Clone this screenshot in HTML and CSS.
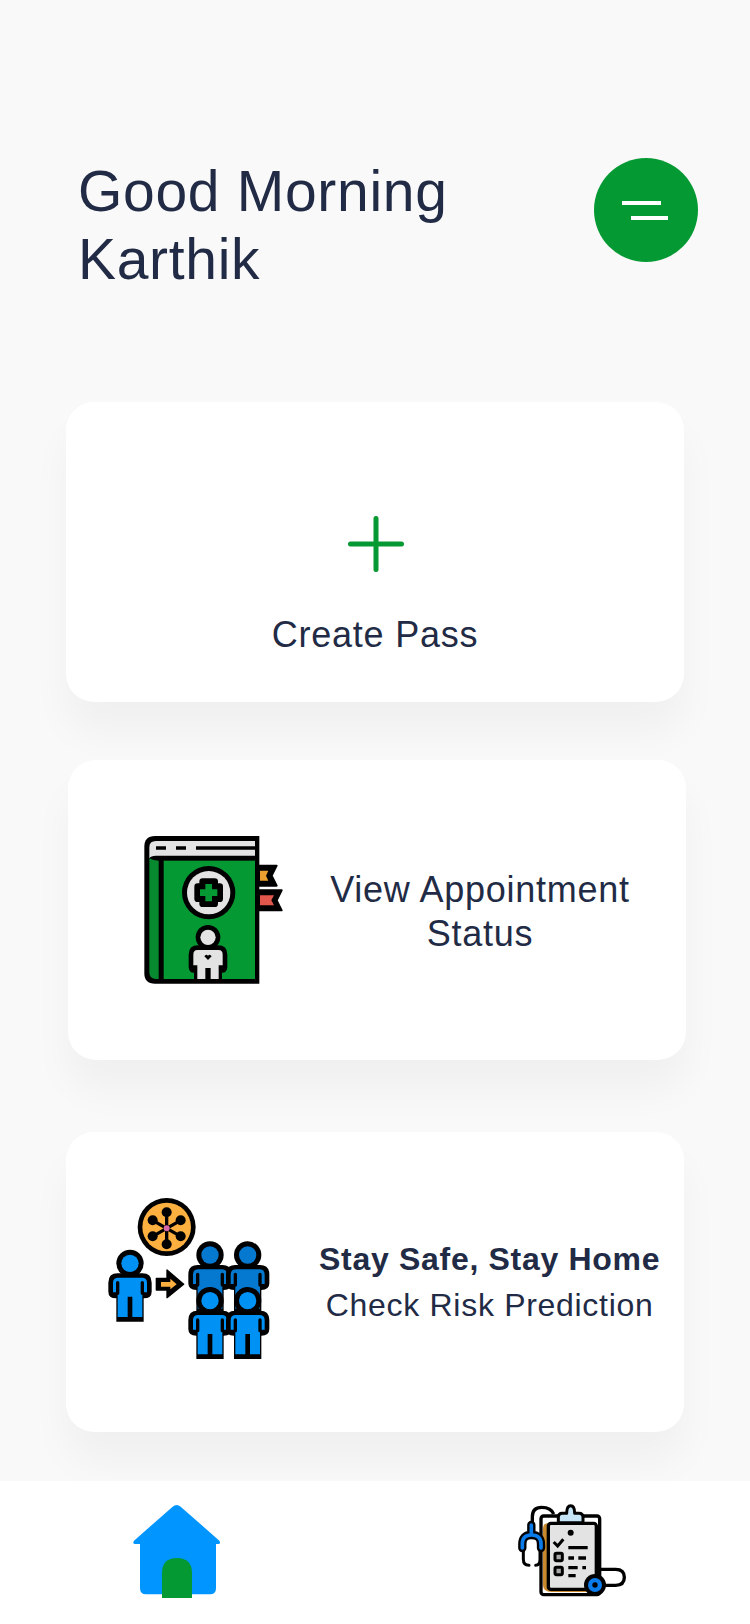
FILE: index.html
```html
<!DOCTYPE html>
<html lang="en">
<head>
    <meta charset="UTF-8">
    <meta name="viewport" content="width=device-width, initial-scale=1.0">
    <title>Home</title>
    <link rel="stylesheet" href="styles.css">
</head>
<body>
    <header class="header">
        <h1 class="greeting">Good Morning<br>Karthik</h1>
        <button class="menu-btn" aria-label="Menu">
            <span class="menu-bar menu-bar-top"></span>
            <span class="menu-bar menu-bar-bottom"></span>
        </button>
    </header>

    <main class="cards">
        <a class="card card-create">
            <svg class="plus-icon" viewBox="0 0 56 56">
                <path d="M28 2.500V53.500M2.500 28H53.500" fill="none" stroke="#059933" stroke-width="5" stroke-linecap="round"/>
            </svg>
            <span class="card-text">Create Pass</span>
        </a>

        <a class="card card-status">
            <svg class="book-icon" viewBox="0 0 540 540">
                <!-- bookmarks -->
                <path d="M415 167H470L455 197L470 227H415Z" fill="#000" stroke="#000" stroke-width="6" stroke-linejoin="round"/>
                <path d="M420 182H445L438 197L445 212H420Z" fill="#eda02f"/>
                <path d="M415 241H485L470 271L485 301H415Z" fill="#000" stroke="#000" stroke-width="6" stroke-linejoin="round"/>
                <path d="M420 256H462L454 271L462 286H420Z" fill="#e2574c"/>
                <!-- cover -->
                <path d="M105 78H418V521H105Q73 521 73 490V110Q73 78 105 78Z" fill="#000"/>
                <path d="M88 145Q100 152 116 152V507H108Q88 507 88 487Z" fill="#078a2f"/>
                <rect x="131" y="152" width="274" height="355" fill="#059933"/>
                <path d="M88 112Q88 93 108 93H405V137H108Q92 137 88 145Z" fill="#e3e3e3"/>
                <path d="M108 114H138M168 114H198M228 114H405" stroke="#000" stroke-width="11"/>
                <!-- badge -->
                <circle cx="266" cy="248" r="80" fill="#000"/>
                <circle cx="266" cy="248" r="65" fill="#e3e3e3"/>
                <rect x="238" y="205" width="56" height="86" rx="10" fill="#000"/>
                <rect x="223" y="220" width="86" height="56" rx="10" fill="#000"/>
                <path d="M266 222V274M240 248H292" fill="none" stroke="#059933" stroke-width="20"/>
                <!-- patient -->
                <circle cx="264" cy="382" r="37" fill="#000"/>
                <circle cx="264" cy="382" r="23" fill="#e3e3e3"/>
                <path d="M234 406H294Q322 406 322 434V470Q322 488 306 488V507H222V488Q206 488 206 470V434Q206 406 234 406Z" fill="#000"/>
                <path d="M232 420H296Q308 420 308 434V466H296V507H272V474H256V507H232V466H220V434Q220 420 232 420Z" fill="#e3e3e3"/>
                <path d="M264 450L253 439Q258 431 264 437Q270 431 275 439Z" fill="#000"/>
            </svg>
            <span class="card-text card-text-wide">View Appointment<br>Status</span>
        </a>

        <a class="card card-risk">
            <svg class="risk-icon" viewBox="0 0 570 570">
                <defs>
                    <g id="person">
                        <circle cx="105" cy="250" r="41" fill="#000"/>
                        <circle cx="105" cy="250" r="26"/>
                        <path d="M68 280H142Q170 280 170 308V335Q170 355 146 355V425H64V355Q40 355 40 335V308Q40 280 68 280Z" fill="#000"/>
                        <path d="M70 293H140Q156 293 156 308V337H142V411H112V350H98V411H68V337H54V308Q54 293 70 293Z"/>
                        <path d="M68 308V340M142 308V340" stroke="#000" stroke-width="10" stroke-linecap="round"/>
                    </g>
                </defs>
                <circle cx="215" cy="141" r="87" fill="#000"/>
                <circle cx="215" cy="141" r="73" fill="#fdb03f"/>
                <path d="M215 145V97M215 145V193M215 145L173 121M215 145L257 121M215 145L173 169M215 145L257 169" stroke="#000" stroke-width="10"/>
                <circle cx="215" cy="97" r="15" fill="#000"/>
                <circle cx="215" cy="193" r="15" fill="#000"/>
                <circle cx="173" cy="121" r="15" fill="#000"/>
                <circle cx="257" cy="121" r="15" fill="#000"/>
                <circle cx="173" cy="169" r="15" fill="#000"/>
                <circle cx="257" cy="169" r="15" fill="#000"/>
                <circle cx="215" cy="145" r="9" fill="#d966a8"/>
                <path d="M184 295H216V270L266 313L216 353V330H184Z" fill="#000" stroke="#000" stroke-width="4" stroke-linejoin="round"/>
                <path d="M198 306H226V296L245 313L226 328V320H198Z" fill="#fdb03f"/>
                <use href="#person" fill="#0091f5"/>
                <use href="#person" x="240" y="-25" fill="#0579d0"/>
                <use href="#person" x="353" y="-25" fill="#0579d0"/>
                <use href="#person" x="240" y="112" fill="#0091f5"/>
                <use href="#person" x="353" y="112" fill="#0091f5"/>
            </svg>
            <span class="card-text card-text-small">
                <strong class="card-title">Stay Safe, Stay Home</strong><br>Check Risk Prediction
            </span>
        </a>
    </main>

    <nav class="bottom-nav">
        <svg class="nav-home" viewBox="0 3 330 429">
            <path d="M158 80Q170 70 182 80L298 182Q304 192 294 192H288V325Q288 343 270 343H78Q60 343 60 325V192H46Q36 192 42 182Z" fill="#0095ff"/>
            <path d="M126 354V280Q126 234 171 234Q216 234 216 280V354Z" fill="#059933"/>
        </svg>
        <svg class="nav-records" viewBox="0 0 390 402">
            <!-- tube behind the board -->
            <path d="M82 108V80Q82 52 110 52Q138 52 146 72" fill="none" stroke="#000" stroke-width="10"/>
            <rect x="108" y="78" width="176" height="236" rx="8" fill="#fff" stroke="#000" stroke-width="10"/>
            <path d="M114 115Q114 100 128 100H250V306H140Q114 306 114 285Z" fill="#c98a2e"/>
            <rect x="130" y="100" width="144" height="198" rx="8" fill="#e3e3e3" stroke="#000" stroke-width="10"/>
            <path d="M160 98V82Q160 70 172 70H185Q185 47 197 47Q209 47 209 70H222Q234 70 234 82V98Z" fill="#c6e4f7" stroke="#000" stroke-width="9" stroke-linejoin="round"/>
            <circle cx="197" cy="128" r="9" fill="#000"/>
            <path d="M146 156L158 168L175 148" fill="none" stroke="#000" stroke-width="9"/>
            <path d="M190 173H248M190 204H207M220 204H243M190 233H218M232 233H243M190 257H212" stroke="#000" stroke-width="10"/>
            <rect x="150" y="190" width="22" height="22" rx="4" fill="#aaa" stroke="#000" stroke-width="9"/>
            <rect x="150" y="232" width="22" height="22" rx="4" fill="#aaa" stroke="#000" stroke-width="9"/>
            <!-- stethoscope -->
            <path d="M55 178V208Q55 226 72 226M105 178V208Q105 226 92 226" fill="none" stroke="#000" stroke-width="9" stroke-linecap="round"/>
            <path d="M79 135Q52 135 52 162V174M79 135Q108 135 108 162V174M79 105V135" fill="none" stroke="#000" stroke-width="25" stroke-linecap="round"/>
            <path d="M79 135Q52 135 52 162V174M79 135Q108 135 108 162V174M79 105V135" fill="none" stroke="#0a7bea" stroke-width="11" stroke-linecap="round"/>
            <path d="M285 238H332Q358 238 358 262Q358 286 332 286H300" fill="none" stroke="#000" stroke-width="10"/>
            <circle cx="270" cy="285" r="33" fill="#000"/>
            <circle cx="270" cy="285" r="21" fill="#0a7bea"/>
            <circle cx="270" cy="285" r="8" fill="#000"/>
        </svg>
    </nav>
</body>
</html>
```

FILE: styles.css
```css
* {
    box-sizing: border-box;
}
body {
    font-family: "Liberation Sans", Arial, sans-serif;
    background-color: #f9f9f9;
    color: #222b45;
    margin: 0;
    height: 1624px;
    display: flex;
    flex-direction: column;
    overflow: hidden;
}
.header {
    display: flex;
    justify-content: space-between;
    align-items: flex-start;
    padding: 158px 52px 0 78px;
}
.greeting {
    margin: 0;
    margin-top: -1px;
    font-size: 57px;
    font-weight: 400;
    line-height: 68px;
    letter-spacing: 0.7px;
}
.menu-btn {
    width: 104px;
    height: 104px;
    border: none;
    border-radius: 50%;
    background-color: #059933;
    display: flex;
    flex-direction: column;
    justify-content: center;
    gap: 11px;
    padding: 0 0 0 28px;
    flex-shrink: 0;
}
.menu-bar {
    display: block;
    height: 4px;
    background-color: #fff;
}
.menu-bar-top {
    width: 39px;
}
.menu-bar-bottom {
    width: 37px;
    margin-left: 9px;
}
.cards {
    display: flex;
    flex-direction: column;
    margin-top: 109px;
}
.card {
    width: 618px;
    height: 300px;
    margin-left: 66px;
    display: flex;
    align-items: center;
    background-color: #fff;
    border-radius: 28px;
    box-shadow: 0 30px 40px rgba(0, 0, 0, 0.04);
}
.card-create {
    flex-direction: column;
    padding-top: 114px;
}
.card-status {
    margin-top: 58px;
    margin-left: 68px;
    padding-left: 52px;
}
.card-risk {
    margin-top: 72px;
    padding-left: 29px;
}
.card-text {
    font-size: 36px;
    line-height: 44px;
    letter-spacing: 0.75px;
    text-align: center;
}
.card-text-wide {
    flex: 1;
    padding: 4px 26px 0 0;
}
.card-text-small {
    font-size: 32px;
    line-height: 46px;
    letter-spacing: 0.7px;
    white-space: nowrap;
}
.card-title {
    font-weight: 700;
}
.plus-icon {
    width: 56px;
    height: 56px;
    margin: 0 0 41px 2px;
}
.book-icon {
    width: 180px;
    height: 180px;
    flex-shrink: 0;
    align-self: flex-start;
    margin-top: 50px;
}
.risk-icon {
    width: 190px;
    height: 190px;
    flex-shrink: 0;
    align-self: flex-start;
    margin: 48px 34px 0 0;
}
.bottom-nav {
    margin-top: auto;
    height: 143px;
    background-color: #fff;
    display: flex;
    justify-content: space-between;
    align-items: flex-start;
    padding: 0 115px 0 120px;
}
.nav-home {
    width: 110px;
    height: 143px;
}
.nav-records {
    width: 130px;
    height: 134px;
    margin-top: 9px;
}
```
